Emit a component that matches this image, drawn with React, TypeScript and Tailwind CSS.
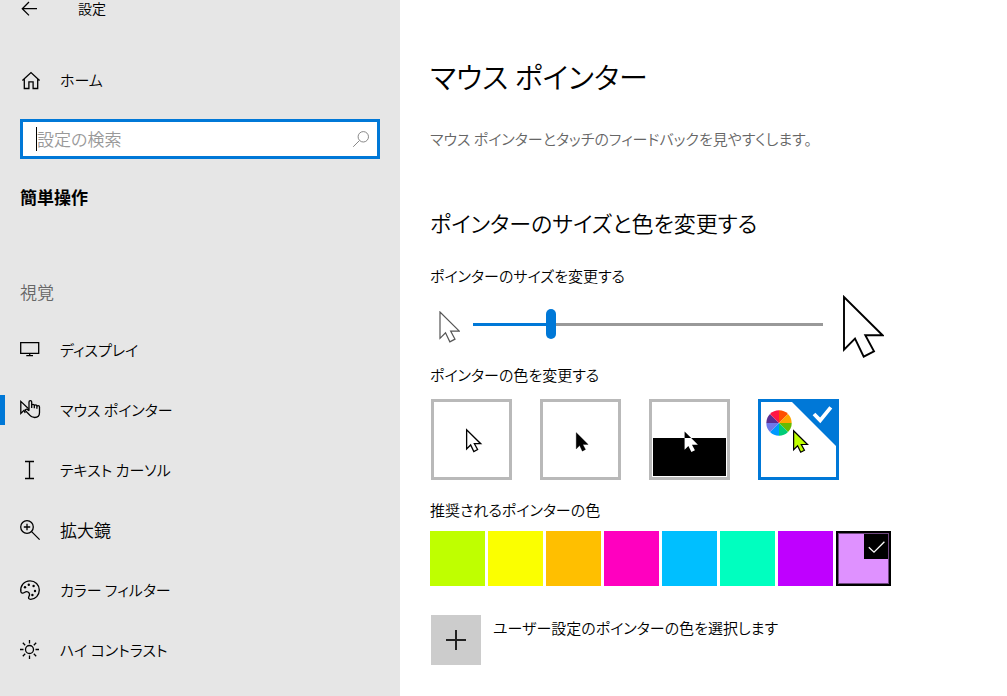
import { useState, type ReactNode } from "react";

const ARROW = "M2 2V54.7L13 43.7L21.7 61.7L32 56.3L23.3 40.3H40.6Z";

function Icon({ children }: { children: ReactNode }) {
  return (
    <svg
      viewBox="0 0 20 20"
      className="size-5 shrink-0 overflow-visible"
      fill="none"
      stroke="currentColor"
      strokeWidth="1.3"
      aria-hidden="true"
    >
      {children}
    </svg>
  );
}

const navItems: { label: string; icon: ReactNode; kanji?: boolean }[] = [
  {
    label: "ディスプレイ",
    icon: <path d="M.7 2.7H18.7V13.3H.7ZM9.7 13.3V15.7M6.3 15.7H13" />,
  },
  {
    label: "マウス ポインター",
    icon: (
      <>
        <path d="M5.2 13L4 10.3L.8 13.4V1.4L8.6 8.8" />
        <path d="M9 10.8V2a1.35 1.35 0 0 1 2.7 0V8M11.7 5.6a1.3 1.3 0 0 1 2.6 0V8.3M14.3 6.2a1.3 1.3 0 0 1 2.6 0V8.8M16.9 7a1.3 1.3 0 0 1 2.6 0V12.5c0 3.4-2 5-4.8 5-2.6 0-4-1-5.3-2.7L5.6 10.9c-.8-1.2.7-2.3 1.8-1.4L9 10.8" />
      </>
    ),
  },
  {
    label: "テキスト カーソル",
    icon: <path d="M5 1.5H14M9.5 1.5V18.5M5 18.5H14" />,
  },
  {
    label: "拡大鏡",
    kanji: true,
    icon: (
      <>
        <circle cx="7" cy="7" r="6.3" />
        <path d="M11.6 11.6L19.6 19.6M3.8 7H10.2M7 3.8V10.2" />
      </>
    ),
  },
  {
    label: "カラー フィルター",
    icon: (
      <>
        <path d="M.9 11.8C-.1 6 4 .8 10 .8c5.2 0 9.3 4 9.3 9.2s-3.9 9.3-8.6 9.3c-2.2 0-2.6-1.3-1.8-2.7.9-1.6.6-3.6-.9-4.6-1.3-.9-2.6-.2-3.6.5-1.2.8-3.1.9-3.5-.7z" />
        <g fill="currentColor" stroke="none">
          <circle cx="5" cy="7.3" r="1.2" />
          <circle cx="8.8" cy="4.7" r="1.2" />
          <circle cx="13.6" cy="6" r="1.2" />
          <circle cx="15" cy="11" r="1.2" />
          <circle cx="12.4" cy="15" r="1.2" />
        </g>
      </>
    ),
  },
  {
    label: "ハイ コントラスト",
    icon: (
      <>
        <circle cx="9.5" cy="9.5" r="4" />
        <path d="M9.5 0V3.5M9.5 15.5V19M0 9.5H3.5M15.5 9.5H19M2.8 2.8L5.2 5.2M13.8 13.8L16.2 16.2M2.8 16.2L5.2 13.8M13.8 5.2L16.2 2.8" />
      </>
    ),
  },
];

const wheelColors = [
  "#ff4f00",
  "#ffa500",
  "#66bb00",
  "#00cc77",
  "#0099ff",
  "#7078ea",
  "#5c2d91",
  "#ff1744",
];

function sector(index: number) {
  const point = (step: number) => {
    const angle = (step * Math.PI) / 4;
    return `${18 + 12.7 * Math.sin(angle)} ${21 - 12.7 * Math.cos(angle)}`;
  };
  return `M18 21L${point(index)}A12.7 12.7 0 0 1 ${point(index + 1)}Z`;
}

const schemes: { label: string; art: ReactNode }[] = [
  {
    label: "白",
    art: (
      <path
        d={ARROW}
        transform="translate(31.9 27) scale(.365)"
        fill="#fff"
        stroke="#000"
        strokeWidth="3.6"
      />
    ),
  },
  {
    label: "黒",
    art: <path d={ARROW} transform="translate(32.6 30) scale(.31)" stroke="#000" strokeWidth="1" />,
  },
  {
    label: "反転",
    art: (
      <>
        <rect x="1" y="36" width="73" height="38" />
        <clipPath id="upper">
          <rect width="75" height="36" />
        </clipPath>
        <path d={ARROW} transform="translate(31.9 28.8) scale(.345)" fill="#fff" />
        <g clipPath="url(#upper)">
          <path d={ARROW} transform="translate(31.9 28.8) scale(.345)" />
        </g>
      </>
    ),
  },
  {
    label: "ユーザー設定",
    art: (
      <>
        <path d="M31 0H75V44Z" fill="#0078d7" />
        <path d="M53 12L59.2 18.4L69.8 5.4" fill="none" stroke="#fff" strokeWidth="3.8" />
        {wheelColors.map((color, i) => (
          <path key={color} d={sector(i)} fill={color} />
        ))}
        <path
          d={ARROW}
          transform="translate(31.9 28) scale(.36)"
          fill="#bfff00"
          stroke="#000"
          strokeWidth="3.4"
        />
      </>
    ),
  },
];

const swatches = [
  { label: "ライム", color: "bg-[#bfff00]" },
  { label: "黄", color: "bg-[#fbff00]" },
  { label: "ゴールド", color: "bg-[#ffbf00]" },
  { label: "ピンク", color: "bg-[#ff00bf]" },
  { label: "ターコイズ", color: "bg-[#00bfff]" },
  { label: "緑", color: "bg-[#00ffbf]" },
  { label: "紫", color: "bg-[#bf00ff]" },
  { label: "ラベンダー", color: "bg-[#df91ff]" },
];

export default function App() {
  const [active, setActive] = useState(1);
  const [size, setSize] = useState(3);
  const [scheme, setScheme] = useState(3);
  const [swatch, setSwatch] = useState(7);
  const filled = (size / 14) * 100;

  return (
    <div className="flex min-h-screen bg-white font-['Noto_Sans_CJK_JP',sans-serif] text-[15px] leading-8 font-[350] text-black [font-feature-settings:'palt']">
      <aside className="w-[400px] shrink-0 bg-[#e6e6e6]">
        <header className="flex h-5 items-start pl-5">
          <button type="button" aria-label="戻る">
            <Icon>
              <path d="M2.3 8.7H17M9 2L2.3 8.7L9 15.4" />
            </Icon>
          </button>
          <span className="pl-[38px] text-sm leading-4">設定</span>
        </header>

        <a href="#home" className="mt-[30px] flex h-[60px] items-center gap-5 px-5">
          <Icon>
            <path d="M2.4 10.6L11 2.6L19.6 10.6M4.3 9V18.5H8.9V11.8H13.1V18.5H17.7V9" />
          </Icon>
          ホーム
        </a>

        <label className="mx-5 mt-[9px] flex h-10 items-center border-3 border-[#0078d7] bg-white pr-[7px] pl-[13px]">
          <span className="h-6 w-px shrink-0 bg-black" />
          <input
            type="search"
            aria-label="設定の検索"
            placeholder="設定の検索"
            className="min-w-0 flex-1 text-[17px] leading-8 outline-none placeholder:text-[#999999]"
          />
          <svg viewBox="0 0 18 18" className="size-[18px]" fill="none" stroke="#888" aria-hidden="true">
            <circle cx="11.3" cy="6.8" r="5.2" />
            <path d="M7.5 10.5L1.2 16.8" />
          </svg>
        </label>

        <h2 className="mt-[22px] px-5 text-[17px] leading-8 font-bold">簡単操作</h2>
        <h3 className="mt-[63px] px-5 text-[17px] leading-8 text-[#666666]">視覚</h3>

        <nav className="mt-3 pb-4">
          {navItems.map((item, i) => (
            <a
              key={item.label}
              href={`#item-${i}`}
              onClick={() => setActive(i)}
              aria-current={active === i ? "page" : undefined}
              className="flex h-[60px] items-center"
            >
              <span className={active === i ? "h-[30px] w-[5px] bg-[#0078d7]" : "w-[5px]"} />
              <span className="flex items-center gap-5 pl-[15px]">
                <Icon>{item.icon}</Icon>
                <span className={item.kanji ? "text-[17px]" : ""}>{item.label}</span>
              </span>
            </a>
          ))}
        </nav>
      </aside>

      <main className="min-w-0 flex-1 px-[30px] pt-[51px] pb-6">
        <h1 className="text-[29px] leading-[50px]">マウス ポインター</h1>
        <p className="mt-[22px] text-[#666666]">マウス ポインターとタッチのフィードバックを見やすくします。</p>

        <h2 className="mt-[47px] text-[22px] leading-10">ポインターのサイズと色を変更する</h2>

        <label htmlFor="size" className="mt-[18px] block">
          ポインターのサイズを変更する
        </label>
        <div className="mt-[3px] flex h-16 items-center pl-[9px]">
          <svg viewBox="0 0 42 64" className="h-8 w-[21px]" fill="#fff" stroke="#555" strokeWidth="2.4" aria-hidden="true">
            <path d={ARROW} />
          </svg>
          <input
            id="size"
            type="range"
            min={0}
            max={14}
            value={size}
            onChange={(e) => setSize(Number(e.target.value))}
            className="mr-[19px] mb-[6px] ml-[13px] h-[3px] w-[350px] min-w-0 appearance-none [&::-webkit-slider-thumb]:h-[30px] [&::-webkit-slider-thumb]:w-[10px] [&::-webkit-slider-thumb]:appearance-none [&::-webkit-slider-thumb]:rounded-full [&::-webkit-slider-thumb]:bg-[#0078d7]"
            style={{ background: `linear-gradient(to right, #0078d7 ${filled}%, #999 ${filled}%)` }}
          />
          <svg viewBox="0 0 42 64" className="h-16 w-[42px] shrink-0" fill="#fff" stroke="#000" strokeWidth="1.9" aria-hidden="true">
            <path d={ARROW} />
          </svg>
        </div>

        <fieldset>
          <legend>ポインターの色を変更する</legend>
          <div className="mt-2 flex flex-wrap gap-7 pl-px">
            {schemes.map((s, i) => (
              <label
                key={s.label}
                className="size-[81px] border-3 border-[#b9b9b9] has-checked:border-[#0078d7]"
              >
                <input
                  type="radio"
                  name="scheme"
                  aria-label={s.label}
                  className="sr-only"
                  checked={scheme === i}
                  onChange={() => setScheme(i)}
                />
                <svg viewBox="0 0 75 75" className="size-full" aria-hidden="true">
                  {s.art}
                </svg>
              </label>
            ))}
          </div>
        </fieldset>

        <fieldset className="mt-[14px]">
          <legend>推奨されるポインターの色</legend>
          <div className="mt-[5px] flex flex-wrap gap-[3px]">
            {swatches.map((s, i) => (
              <label key={s.label} className={`relative size-[55px] ${s.color}`}>
                <input
                  type="radio"
                  name="swatch"
                  aria-label={s.label}
                  className="sr-only"
                  checked={swatch === i}
                  onChange={() => setSwatch(i)}
                />
                {swatch === i && (
                  <span className="flex size-full justify-end border-2 border-black outline -outline-offset-3 outline-[#704880]">
                    <svg viewBox="0 0 25 26" className="h-[26px] w-[25px] bg-black" fill="none" stroke="#fff" strokeWidth="1.3" aria-hidden="true">
                      <path d="M4.8 14.2L10 19.2L20.4 8.8" />
                    </svg>
                  </span>
                )}
              </label>
            ))}
          </div>
        </fieldset>

        <div className="mt-[29px] flex gap-3 pl-px">
          <button id="custom" type="button" aria-labelledby="custom-label" className="grid size-[50px] shrink-0 place-items-center bg-[#cccccc]">
            <svg viewBox="0 0 20 20" className="size-5" stroke="#222" strokeWidth="2" aria-hidden="true">
              <path d="M0 10H20M10 0V20" />
            </svg>
          </button>
          <label id="custom-label" htmlFor="custom" className="-mt-[3px]">
            ユーザー設定のポインターの色を選択します
          </label>
        </div>
      </main>
    </div>
  );
}
